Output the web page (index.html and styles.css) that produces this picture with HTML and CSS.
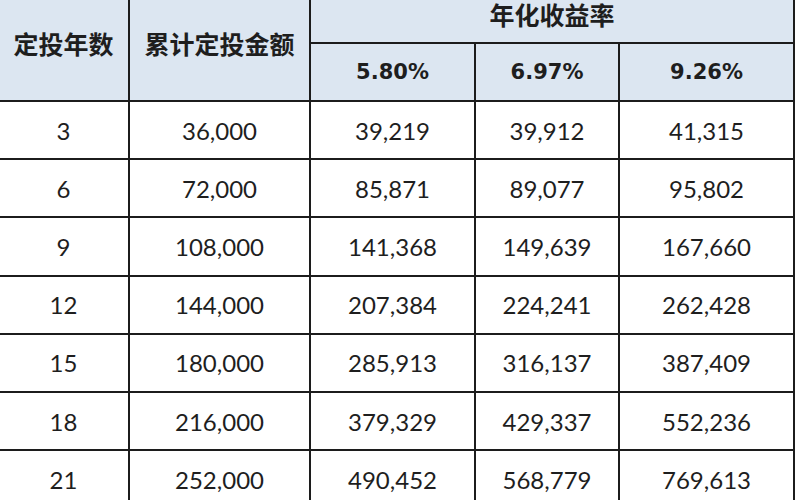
FILE: index.html
```html
<!DOCTYPE html>
<html lang="zh">
<head>
<meta charset="utf-8">
<title>定投收益表</title>
<link rel="stylesheet" href="styles.css">
</head>
<body>
<table class="grid">
  <colgroup>
    <col class="c1"><col class="c2"><col class="c3"><col class="c4"><col class="c5">
  </colgroup>
  <thead>
    <tr class="h1">
      <th rowspan="2" class="zh">定投年数</th>
      <th rowspan="2" class="zh">累计定投金额</th>
      <th colspan="3" class="zh">年化收益率</th>
    </tr>
    <tr class="h2">
      <th class="pct">5.80%</th>
      <th class="pct">6.97%</th>
      <th class="pct">9.26%</th>
    </tr>
  </thead>
  <tbody>
    <tr><td>3</td><td>36,000</td><td>39,219</td><td>39,912</td><td>41,315</td></tr>
    <tr><td>6</td><td>72,000</td><td>85,871</td><td>89,077</td><td>95,802</td></tr>
    <tr><td>9</td><td>108,000</td><td>141,368</td><td>149,639</td><td>167,660</td></tr>
    <tr><td>12</td><td>144,000</td><td>207,384</td><td>224,241</td><td>262,428</td></tr>
    <tr><td>15</td><td>180,000</td><td>285,913</td><td>316,137</td><td>387,409</td></tr>
    <tr><td>18</td><td>216,000</td><td>379,329</td><td>429,337</td><td>552,236</td></tr>
    <tr><td>21</td><td>252,000</td><td>490,452</td><td>568,779</td><td>769,613</td></tr>
  </tbody>
</table>
</body>
</html>
```
FILE: styles.css
```css
html, body {
  margin: 0;
  padding: 0;
  background: #ffffff;
  overflow: hidden;
}
body {
  width: 800px;
  height: 500px;
}
.grid {
  border-collapse: collapse;
  table-layout: fixed;
  width: 796px;
  margin: -17px 0 0 -3px;
  color: #1e1e1e;
}
.c1 { width: 131px; }
.c2 { width: 181px; }
.c3 { width: 165px; }
.c4 { width: 144px; }
.c5 { width: 175px; }
.grid th, .grid td {
  border: 2px solid #1c1c1c;
  text-align: center;
  vertical-align: middle;
  padding: 0;
}
.grid th {
  background: #dce6f1;
}
.h1 { height: 59px; }
.h2 { height: 58px; }
.grid tbody tr { height: 58.2px; }
.zh {
  font-family: "Noto Sans CJK SC", "Noto Sans", sans-serif;
  font-weight: 700;
  font-size: 25px;
}
.pct {
  font-family: "DejaVu Sans", sans-serif;
  font-weight: 700;
  font-size: 21px;
}
.grid td {
  font-family: Lato, "Liberation Sans", sans-serif;
  font-size: 24px;
  font-weight: 400;
}
```
